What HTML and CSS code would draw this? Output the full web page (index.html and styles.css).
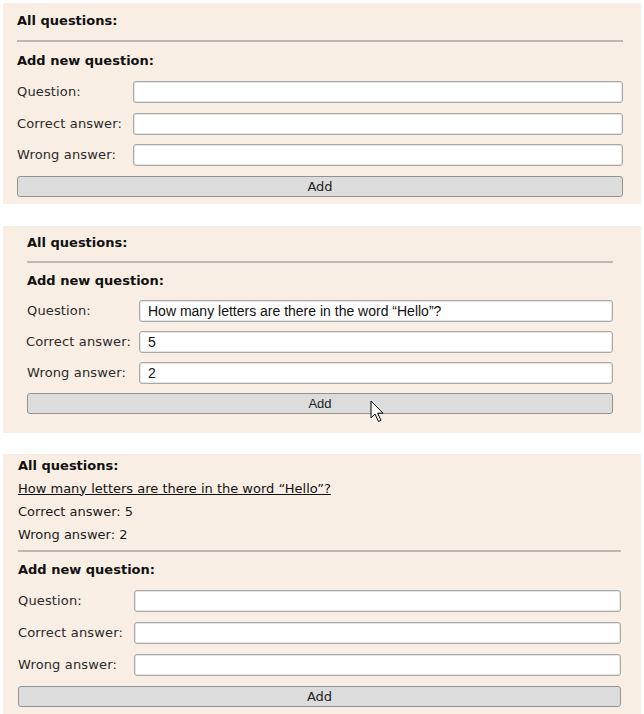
FILE: index.html
```html
<!DOCTYPE html>
<html>
<head>
<meta charset="utf-8">
<link rel="stylesheet" href="styles.css">
</head>
<body>
<div class="page">
  <section class="panel p1">
    <div class="title">All questions:</div>
    <div class="rule"></div>
    <div class="title sub">Add new question:</div>
    <div class="form">
      <label class="lbl">Question:</label><div class="field"></div>
      <label class="lbl">Correct answer:</label><div class="field"></div>
      <label class="lbl">Wrong answer:</label><div class="field"></div>
      <div class="btn">Add</div>
    </div>
  </section>

  <section class="panel p2">
    <div class="title">All questions:</div>
    <div class="rule"></div>
    <div class="title sub">Add new question:</div>
    <div class="form">
      <label class="lbl">Question:</label><div class="field">How many letters are there in the word “Hello”?</div>
      <label class="lbl shift">Correct answer:</label><div class="field">5</div>
      <label class="lbl">Wrong answer:</label><div class="field">2</div>
      <div class="btn">Add</div>
    </div>
    <svg class="cursor" width="16" height="24" viewBox="0 0 16 24"><path d="M1 1 L1 18 L5 14 L8.5 21.5 L11 20.3 L7.6 13.2 L13 13.2 Z" fill="#fff" stroke="#000" stroke-width="1" stroke-linejoin="miter"/></svg>
  </section>

  <section class="panel p3">
    <div class="list">
      <div class="title">All questions:</div>
      <a class="qlink" href="#">How many letters are there in the word “Hello”?</a>
      <div>Correct answer: 5</div>
      <div>Wrong answer: 2</div>
    </div>
    <div class="rule"></div>
    <div class="title sub">Add new question:</div>
    <div class="form">
      <label class="lbl">Question:</label><div class="field"></div>
      <label class="lbl">Correct answer:</label><div class="field"></div>
      <label class="lbl">Wrong answer:</label><div class="field"></div>
      <div class="btn">Add</div>
    </div>
  </section>
</div>
</body>
</html>
```
FILE: styles.css
```css
* { box-sizing: border-box; }
html, body { margin: 0; padding: 0; background: #fff; }
body {
  font-family: "DejaVu Sans", Verdana, sans-serif;
  font-size: 13px;
  color: #1a1a1a;
}
.page {
  display: flex;
  flex-direction: column;
  padding: 3px 3px 0 3px;
}
.panel {
  background: #f9eee4;
  position: relative;
}
.title {
  font-weight: bold;
  line-height: 18px;
  color: #111;
}
.rule {
  height: 2px;
  background: #bdbab6;
}
.form {
  display: grid;
  grid-template-columns: 116px 1fr;
  row-gap: 10px;
  align-items: center;
}
.lbl {
  color: #2a2a2a;
  line-height: 22px;
  letter-spacing: 0.15px;
}
.field {
  height: 22px;
  background: #fff;
  border: 1px solid #a9a9a9;
  border-radius: 3px;
  box-shadow: inset 0 0 0 1px #e4e4e4;
  font-family: "Liberation Sans", Arial, sans-serif;
  font-size: 14px;
  line-height: 20px;
  padding-left: 8px;
  color: #111;
}
.btn {
  grid-column: 1 / -1;
  height: 21px;
  background: #dcdcdc;
  border: 1px solid #939393;
  border-radius: 3px;
  text-align: center;
  line-height: 19px;
  color: #222;
}

/* panel 1 */
.p1 { padding: 9px 18px 7px 14px; }
.p1 .rule { margin-top: 10px; }
.p1 .sub { margin-top: 10px; }
.p1 .form { margin-top: 11px; row-gap: 9.5px; }

/* panel 2 */
.p2 { margin-top: 22px; padding: 8px 28px 19px 24px; }
.p2 .rule { margin-top: 9px; }
.p2 .sub { margin-top: 9px; }
.p2 .form { margin-top: 10px; grid-template-columns: 112px 1fr; row-gap: 9px; }
.p2 .lbl.shift { margin-left: -1px; }
.p2 .btn { font-family: "Liberation Sans", Arial, sans-serif; }
.cursor { position: absolute; left: 367px; top: 174px; }

/* panel 3 */
.p3 { margin-top: 21px; padding: 0 20px 8px 15px; }
.p3 .list { line-height: 23px; }
.p3 .list .title { line-height: 23px; }
.qlink { color: #111; text-decoration: underline; display: block; }
.p3 .rule { margin-top: 4px; }
.p3 .sub { margin-top: 9px; }
.p3 .form { margin-top: 11px; row-gap: 10px; }
```
